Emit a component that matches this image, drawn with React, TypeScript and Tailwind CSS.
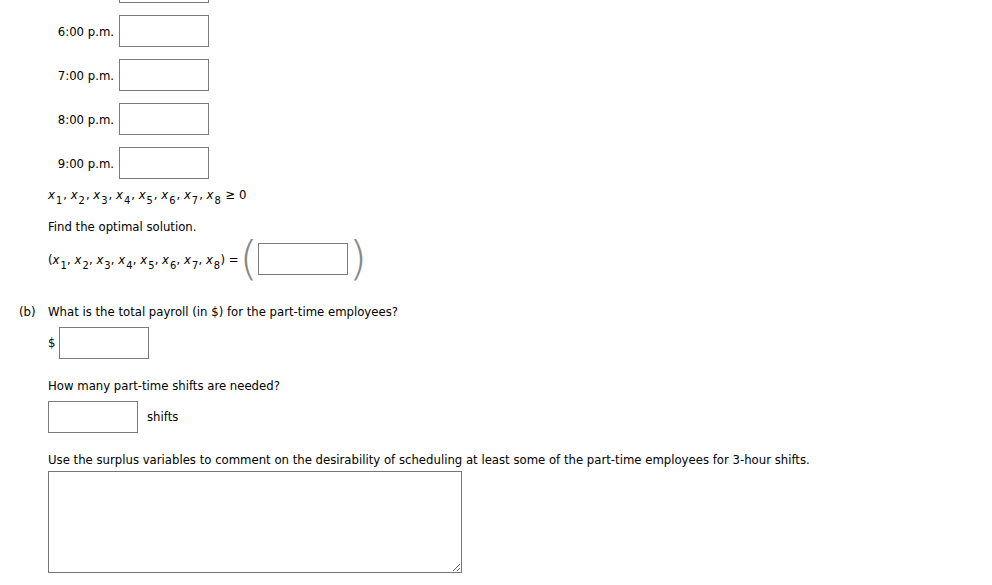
import React from "react";

const font = { fontFamily: '"DejaVu Sans Condensed", "DejaVu Sans", Verdana, sans-serif', fontStretch: "condensed" };
const parenFont = { fontFamily: '"DejaVu Sans", sans-serif' };

const Box = ({ className = "" }: { className?: string }) => (
    <input
        type="text"
        className={`h-[32px] w-[90px] shrink-0 border border-[#7a7a7a] bg-white outline-none ${className}`}
    />
);

const X = ({ n, tight }: { n: number; tight?: boolean }) => (
    <span>
        <i>x</i>
        <sub className={`bottom-[-5px] ml-[1px] text-[11px] not-italic ${tight ? "mr-[0.25px]" : "mr-[1px]"}`}>{n}</sub>
    </span>
);

const Vars = ({ tight }: { tight?: boolean }) => (
    <>
        {[1, 2, 3, 4, 5, 6, 7, 8].map((n, i) => (
            <span key={n}>
                <X n={n} tight={tight} />
                {i < 7 ? ", " : ""}
            </span>
        ))}
    </>
);

const times = ["6:00 p.m.", "7:00 p.m.", "8:00 p.m.", "9:00 p.m."];

export default function App() {
    return (
        <div className="min-h-[585px] w-[992px] bg-white text-[13px] leading-4 text-black" style={font}>
            {/* bottom of the previous row's input */}
            <div className="ml-[119px] h-[3px] w-[90px] border-x border-b border-[#7a7a7a]" />

            <div className="mt-[12px] flex flex-col gap-[12px]">
                {times.map((t) => (
                    <div key={t} className="flex items-center">
                        <span className="w-[114px] pt-[2px] text-right">{t}</span>
                        <Box className="ml-[5px]" />
                    </div>
                ))}
            </div>

            <div className="pl-[48px]">
                <div className="mt-[8px] h-[18px]">
                    <Vars /> ≥ 0
                </div>

                <div className="mt-[14px]">Find the optimal solution.</div>

                <div className="mt-[8px] flex h-[32px] items-center">
                    <span className="pt-[1px]">
                        (<Vars tight />) =
                    </span>
                    <span className="ml-[1px] mt-[-2px] text-[47px] font-extralight leading-[32px] text-[#888]" style={parenFont}>
                        (
                    </span>
                    <Box className="ml-[0px]" />
                    <span className="ml-[1px] mt-[-2px] text-[47px] font-extralight leading-[32px] text-[#888]" style={parenFont}>
                        )
                    </span>
                </div>
            </div>

            <div className="mt-[29px] flex">
                <span className="w-[48px] pl-[19px]">(b)</span>
                <div className="flex-1">
                    <div>What is the total payroll (in $) for the part-time employees?</div>

                    <div className="mt-[7px] flex items-center">
                        <span>$</span>
                        <Box className="ml-[4px]" />
                    </div>

                    <div className="mt-[19px]">How many part-time shifts are needed?</div>

                    <div className="mt-[7px] flex items-center">
                        <Box />
                        <span className="ml-[9px]">shifts</span>
                    </div>

                    <div className="mt-[19px]">
                        Use the surplus variables to comment on the desirability of scheduling at least some of the part-time employees for 3-hour shifts.
                    </div>

                    <textarea className="mt-[3px] block h-[102px] w-[414px] border border-[#767676] outline-none" />
                </div>
            </div>
        </div>
    );
}
